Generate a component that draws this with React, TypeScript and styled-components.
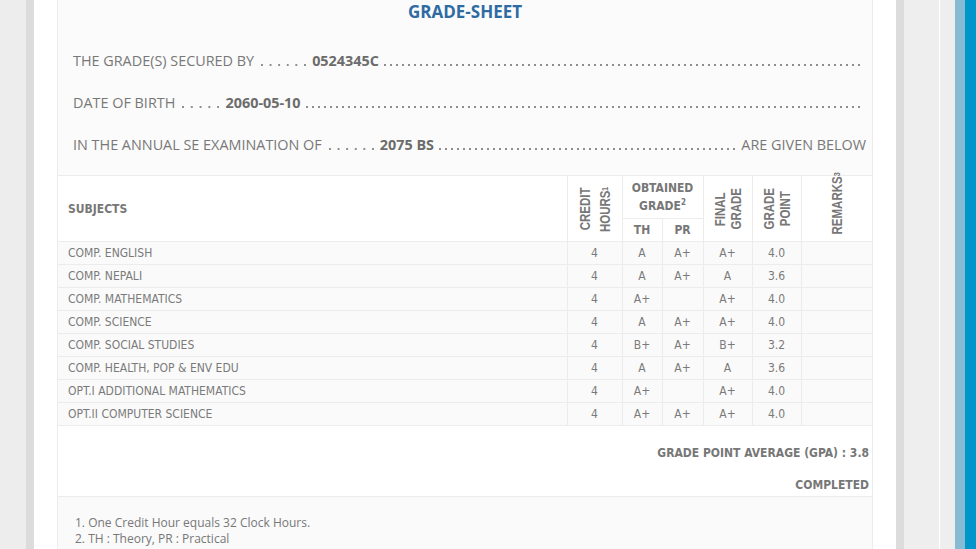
import styled, { createGlobalStyle } from "styled-components";

const GlobalStyle = createGlobalStyle`
  html, body {
    margin: 0;
    padding: 0;
    overflow: hidden;
  }
  body {
    background: #fff;
    font-family: "Open Sans", "Liberation Sans", sans-serif;
  }
`;

const Page = styled.div`
  display: flex;
  width: 976px;
  height: 549px;
  overflow: hidden;
`;

const Strip = styled.div<{ $w: number; $bg: string }>`
  flex: none;
  width: ${(p) => p.$w}px;
  background: ${(p) => p.$bg};
`;

const Main = styled.div`
  flex: 1;
  padding: 0 23px;
  background: #fff;
  overflow: hidden;
`;

const Card = styled.div`
  border-left: 1px solid #ececec;
  border-right: 1px solid #ececec;
  background: #fbfbfb;
`;

const Title = styled.h2`
  margin: 0;
  text-align: center;
  font-size: 17px;
  line-height: 24px;
  font-weight: 700;
  color: #2f6ba3;
`;

const InfoBlock = styled.div`
  padding: 16px 6px 9px 15px;
  border-bottom: 1px solid #ececec;
`;

const InfoLine = styled.div`
  display: flex;
  align-items: baseline;
  height: 42px;
  line-height: 42px;
  font-size: 14.4px;
  color: #787878;
  white-space: nowrap;
`;

const Value = styled.b`
  font-weight: 700;
  color: #6c6c6c;
`;

// dotted leader: a fixed run of $count dots, or a filler when no count is given
const Leader = styled.span<{ $count?: number; $step: number }>`
  display: inline-block;
  height: 2px;
  margin: 0 6px 0 7px;
  ${(p) =>
    p.$count
      ? `width: ${(p.$count - 1) * p.$step + 2}px; flex: none;`
      : "flex: 1; margin-left: 5px;"}
  background-image: linear-gradient(to right, #8e8e8e 2px, transparent 2px);
  background-size: ${(p) => p.$step}px 2px;
  background-repeat: repeat-x;
  background-position: left bottom;
`;

const Sheet = styled.table`
  width: 100%;
  border-collapse: collapse;
  table-layout: fixed;
  font-family: "DejaVu Sans Condensed", "DejaVu Sans", sans-serif;
  font-size: 12px;
  color: #7a7a7a;
`;

const Head = styled.th<{ $left?: boolean; $h?: number }>`
  padding: 0 ${(p) => (p.$left ? "10px" : "0")};
  height: ${(p) => p.$h ?? 22}px;
  background: #fff;
  border: 1px solid #ececec;
  border-top: none;
  font-weight: 700;
  font-size: 12px;
  line-height: 18px;
  color: #777;
  text-align: ${(p) => (p.$left ? "left" : "center")};
  vertical-align: middle;
  &:first-child {
    border-left: none;
  }
  &:last-child {
    border-right: none;
  }
`;

const Vertical = styled.div<{ $gap?: number }>`
  display: inline-block;
  vertical-align: middle;
  height: 62px;
  writing-mode: vertical-rl;
  transform: rotate(180deg) scaleY(0.82);
  text-align: center;
  font-family: "Liberation Sans", Arial, sans-serif;
  font-weight: 700;
  font-size: 14px;
  line-height: ${(p) => p.$gap ?? 16}px;
  color: #777;
  white-space: nowrap;
`;

const Sup = styled.sup`
  position: relative;
  top: -5px;
  vertical-align: baseline;
  font-size: 8px;
  line-height: 0;
`;

const VSup = styled.span`
  font-size: 9px;
  line-height: 0;
  padding-bottom: 1px;
`;

const Cell = styled.td<{ $left?: boolean }>`
  height: 22px;
  padding: 0 ${(p) => (p.$left ? "10px" : "0")};
  background: #fafafa;
  border: 1px solid #ececec;
  text-align: ${(p) => (p.$left ? "left" : "center")};
  vertical-align: middle;
  white-space: nowrap;
  &:first-child {
    border-left: none;
  }
  &:last-child {
    border-right: none;
  }
`;

const Summary = styled.div`
  padding: 19px 3px 3px;
  background: #fff;
  border-bottom: 1px solid #ececec;
  text-align: right;
  font-family: "DejaVu Sans Condensed", "DejaVu Sans", sans-serif;
  font-weight: 700;
  font-size: 12px;
  line-height: 16px;
  color: #777;
  p {
    margin: 0 0 16px;
  }
  p:last-child {
    margin: 0;
  }
`;

const Notes = styled.ol`
  margin: 0;
  padding: 18px 0 20px 17px;
  list-style: none;
  background: #fafafa;
  font-size: 12px;
  line-height: 16px;
  color: #777;
`;

const rows = [
  ["COMP. ENGLISH", "4", "A", "A+", "A+", "4.0"],
  ["COMP. NEPALI", "4", "A", "A+", "A", "3.6"],
  ["COMP. MATHEMATICS", "4", "A+", "", "A+", "4.0"],
  ["COMP. SCIENCE", "4", "A", "A+", "A+", "4.0"],
  ["COMP. SOCIAL STUDIES", "4", "B+", "A+", "B+", "3.2"],
  ["COMP. HEALTH, POP & ENV EDU", "4", "A", "A+", "A", "3.6"],
  ["OPT.I ADDITIONAL MATHEMATICS", "4", "A+", "", "A+", "4.0"],
  ["OPT.II COMPUTER SCIENCE", "4", "A+", "A+", "A+", "4.0"],
];

export default function App() {
  return (
    <>
      <GlobalStyle />
      <Page>
        <Strip $w={26} $bg="#ededed" />
        <Strip $w={8} $bg="#dcdcdc" />
        <Main>
          <Card>
            <Title>GRADE-SHEET</Title>
            <InfoBlock>
              <InfoLine>
                THE GRADE(S) SECURED BY
                <Leader $count={6} $step={8.6} />
                <Value>0524345C</Value>
                <Leader $step={6} />
              </InfoLine>
              <InfoLine>
                DATE OF BIRTH
                <Leader $count={5} $step={8.8} />
                <Value>2060-05-10</Value>
                <Leader $step={6} />
              </InfoLine>
              <InfoLine>
                IN THE ANNUAL SE EXAMINATION OF
                <Leader $count={6} $step={8.6} />
                <Value>2075 BS</Value>
                <Leader $step={6} />
                ARE GIVEN BELOW
              </InfoLine>
            </InfoBlock>

            <Sheet>
              <colgroup>
                <col />
                <col style={{ width: 55 }} />
                <col style={{ width: 40 }} />
                <col style={{ width: 41 }} />
                <col style={{ width: 49 }} />
                <col style={{ width: 49 }} />
                <col style={{ width: 71 }} />
              </colgroup>
              <thead>
                <tr>
                  <Head $left rowSpan={2} $h={42}>
                    SUBJECTS
                  </Head>
                  <Head rowSpan={2}>
                    <Vertical $gap={20}>
                      CREDIT
                      <br />
                      HOURS<VSup>1</VSup>
                    </Vertical>
                  </Head>
                  <Head colSpan={2} $h={42}>
                    OBTAINED
                    <br />
                    GRADE<Sup>2</Sup>
                  </Head>
                  <Head rowSpan={2}>
                    <Vertical>
                      FINAL
                      <br />
                      GRADE
                    </Vertical>
                  </Head>
                  <Head rowSpan={2}>
                    <Vertical>
                      GRADE
                      <br />
                      POINT
                    </Vertical>
                  </Head>
                  <Head rowSpan={2}>
                    <Vertical>
                      REMARKS<VSup>3</VSup>
                    </Vertical>
                  </Head>
                </tr>
                <tr>
                  <Head>TH</Head>
                  <Head>PR</Head>
                </tr>
              </thead>
              <tbody>
                {rows.map((r) => (
                  <tr key={r[0]}>
                    <Cell $left>{r[0]}</Cell>
                    {r.slice(1).map((v, i) => (
                      <Cell key={i}>{v}</Cell>
                    ))}
                    <Cell />
                  </tr>
                ))}
              </tbody>
            </Sheet>

            <Summary>
              <p>GRADE POINT AVERAGE (GPA) : 3.8</p>
              <p>COMPLETED</p>
            </Summary>

            <Notes>
              <li>1. One Credit Hour equals 32 Clock Hours.</li>
              <li>2. TH : Theory, PR : Practical</li>
            </Notes>
          </Card>
        </Main>
        <Strip $w={8} $bg="#dcdcdc" />
        <Strip $w={35} $bg="#eeeeee" />
        <Strip $w={1} $bg="#ffffff" />
        <Strip $w={15} $bg="#eeeeee" />
        <Strip $w={10} $bg="#85bcd3" />
        <Strip $w={11} $bg="#0096cc" />
      </Page>
    </>
  );
}
